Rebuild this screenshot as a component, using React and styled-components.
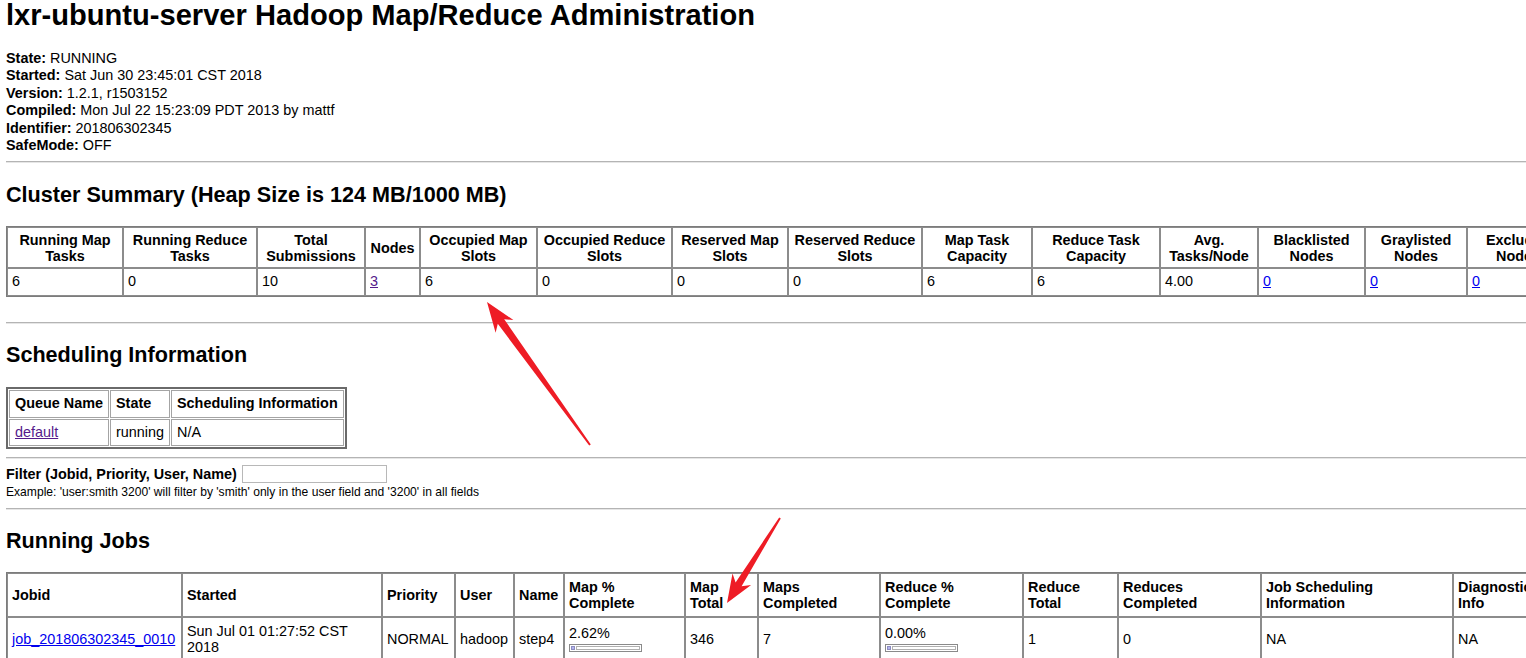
import React from 'react';
import styled, { createGlobalStyle } from 'styled-components';

const GlobalStyle = createGlobalStyle`
  html, body {
    margin: 0;
    padding: 0;
    overflow: hidden;
    background: #fff;
  }
  body {
    font-family: "Liberation Sans", Arial, sans-serif;
    font-size: 14.4px;
    color: #000;
  }
`;

const Page = styled.div`
  position: relative;
  display: flow-root;
  width: 1526px;
  height: 658px;
  overflow: hidden;
  padding-left: 6px;
  box-sizing: border-box;
`;

const Title = styled.h1`
  font-size: 29.1px;
  line-height: 34px;
  font-weight: bold;
  margin: -2px 0 18px;
  white-space: nowrap;
`;

const InfoList = styled.div`
  line-height: 17.4px;
`;

const Rule = styled.hr`
  height: 0;
  margin: ${p => p.$top}px 0 0;
  border: 0;
  border-top: 1px solid #b4b4b4;
  border-bottom: 1px solid #e6e6e6;
`;

const SectionTitle = styled.h2`
  font-size: 21.6px;
  line-height: 25px;
  font-weight: bold;
  margin: 18.5px 0 ${p => p.$after || 19.5}px;
  white-space: nowrap;
`;

const GridTable = styled.table`
  table-layout: fixed;
  border-collapse: separate;
  border-spacing: 0;
  border: 1px solid #7c7c7c;
  font-size: 14.4px;
`;

const HeadCell = styled.th`
  box-sizing: border-box;
  border: 1px solid #8c8c8c;
  padding: ${p => (p.$roomy ? '5px 4px' : '3.5px 4px')};
  line-height: 16px;
  font-weight: bold;
  text-align: ${p => p.$align || 'center'};
  vertical-align: middle;
  white-space: nowrap;
  overflow: hidden;
`;

const DataCell = styled.td`
  box-sizing: border-box;
  border: 1px solid #8c8c8c;
  padding: ${p => (p.$roomy ? '5px 4px' : '4px 4px')};
  line-height: ${p => (p.$roomy ? '16px' : '17.4px')};
  text-align: left;
  vertical-align: middle;
  overflow: hidden;
`;

const QueueTable = styled.table`
  border: 2px solid #6a6a6a;
  border-spacing: 1px;
  font-size: 14.4px;
`;

const QueueHead = styled.th`
  border: 1px solid #a4a4a4;
  padding: 4.5px 5px;
  line-height: 17px;
  text-align: left;
  font-weight: bold;
`;

const QueueCell = styled.td`
  border: 1px solid #a4a4a4;
  padding: 4.5px 5px;
  line-height: 16px;
  text-align: left;
`;

const Link = styled.a`
  color: ${p => (p.$visited ? '#551a8b' : '#0000ee')};
  text-decoration: underline;
  cursor: pointer;
`;

const FilterRow = styled.div`
  display: flex;
  align-items: center;
  gap: 5px;
  height: 18px;
  margin-top: 6px;
  font-weight: bold;
`;

const FilterInput = styled.input`
  box-sizing: border-box;
  width: 145px;
  height: 18px;
  padding: 0 2px;
  border: 1px solid #b8b8b8;
  font: inherit;
  font-weight: normal;
  font-size: 12px;
`;

const Hint = styled.div`
  font-size: 12.1px;
  line-height: 14px;
  margin-top: 2.5px;
`;

const Progress = styled.div`
  display: flex;
  gap: 1px;
  box-sizing: border-box;
  width: 73px;
  height: 8px;
  margin-top: 3px;
  padding: 1px;
  border: 1px solid #8a8a8a;
`;

const ProgressFill = styled.div`
  box-sizing: border-box;
  border: 1px solid #8d8dc0;
  background: #b4b4f0;
`;

const ProgressRest = styled.div`
  flex: 1;
  border: 1px solid #b0b0b0;
`;

const Overlay = styled.svg`
  position: absolute;
  top: 0;
  left: 0;
  pointer-events: none;
`;

const info = [
  ['State:', 'RUNNING'],
  ['Started:', 'Sat Jun 30 23:45:01 CST 2018'],
  ['Version:', '1.2.1, r1503152'],
  ['Compiled:', 'Mon Jul 22 15:23:09 PDT 2013 by mattf'],
  ['Identifier:', '201806302345'],
  ['SafeMode:', 'OFF'],
];

const cluster = [
  { head: ['Running Map', 'Tasks'], w: 116, value: '6' },
  { head: ['Running Reduce', 'Tasks'], w: 134, value: '0' },
  { head: ['Total', 'Submissions'], w: 108, value: '10' },
  { head: ['Nodes'], w: 55, value: '3', link: 'visited' },
  { head: ['Occupied Map', 'Slots'], w: 117, value: '6' },
  { head: ['Occupied Reduce', 'Slots'], w: 135, value: '0' },
  { head: ['Reserved Map', 'Slots'], w: 116, value: '0' },
  { head: ['Reserved Reduce', 'Slots'], w: 134, value: '0' },
  { head: ['Map Task', 'Capacity'], w: 110, value: '6' },
  { head: ['Reduce Task', 'Capacity'], w: 128, value: '6' },
  { head: ['Avg.', 'Tasks/Node'], w: 98, value: '4.00' },
  { head: ['Blacklisted', 'Nodes'], w: 107, value: '0', link: 'new' },
  { head: ['Graylisted', 'Nodes'], w: 102, value: '0', link: 'new' },
  { head: ['Excluded', 'Nodes'], w: 102, value: '0', link: 'new' },
];

const jobCols = [
  { head: ['Jobid'], w: 175 },
  { head: ['Started'], w: 200 },
  { head: ['Priority'], w: 73 },
  { head: ['User'], w: 59 },
  { head: ['Name'], w: 50 },
  { head: ['Map %', 'Complete'], w: 121 },
  { head: ['Map', 'Total'], w: 73 },
  { head: ['Maps', 'Completed'], w: 122 },
  { head: ['Reduce %', 'Complete'], w: 143 },
  { head: ['Reduce', 'Total'], w: 95 },
  { head: ['Reduces', 'Completed'], w: 143 },
  { head: ['Job Scheduling', 'Information'], w: 192 },
  { head: ['Diagnostic', 'Info'], w: 120 },
];

const sum = cols => cols.reduce((t, c) => t + c.w, 0) + 2;

const Lines = ({ lines }) =>
  lines.map((l, i) => (
    <React.Fragment key={i}>
      {i > 0 && <br />}
      {l}
    </React.Fragment>
  ));

const Percent = ({ value }) => (
  <>
    {value.toFixed(2)}%
    <Progress>
      <ProgressFill style={{ width: Math.max(4, (value / 100) * 69) }} />
      <ProgressRest />
    </Progress>
  </>
);

const Arrows = () => (
  <Overlay width="1526" height="658" viewBox="0 0 1526 658">
    <polygon
      fill="#ee1c25"
      points="487,302 513.4,320 504.2,319.2 590.8,444.4 589.2,445.6 497.8,323.8 495.6,332.8"
    />
    <polygon
      fill="#ee1c25"
      points="727,603 751.1,585.1 741.6,586.2 780.8,518.5 779.2,517.5 735.6,582.4 732.5,573.5"
    />
  </Overlay>
);

export default function App() {
  return (
    <>
      <GlobalStyle />
      <Page>
        <Title>lxr-ubuntu-server Hadoop Map/Reduce Administration</Title>

        <InfoList>
          {info.map(([label, value]) => (
            <div key={label}>
              <b>{label}</b> {value}
            </div>
          ))}
        </InfoList>

        <Rule $top={7} />
        <SectionTitle>Cluster Summary (Heap Size is 124 MB/1000 MB)</SectionTitle>
        <GridTable style={{ width: sum(cluster) }}>
          <thead>
            <tr>
              {cluster.map(c => (
                <HeadCell key={c.head.join()} style={{ width: c.w }}>
                  <Lines lines={c.head} />
                </HeadCell>
              ))}
            </tr>
          </thead>
          <tbody>
            <tr>
              {cluster.map(c => (
                <DataCell key={c.head.join()}>
                  {c.link ? <Link $visited={c.link === 'visited'}>{c.value}</Link> : c.value}
                </DataCell>
              ))}
            </tr>
          </tbody>
        </GridTable>

        <Rule $top={25} />
        <SectionTitle>Scheduling Information</SectionTitle>
        <QueueTable>
          <thead>
            <tr>
              <QueueHead>Queue Name</QueueHead>
              <QueueHead>State</QueueHead>
              <QueueHead>Scheduling Information</QueueHead>
            </tr>
          </thead>
          <tbody>
            <tr>
              <QueueCell>
                <Link $visited>default</Link>
              </QueueCell>
              <QueueCell>running</QueueCell>
              <QueueCell>N/A</QueueCell>
            </tr>
          </tbody>
        </QueueTable>

        <Rule $top={8} />
        <FilterRow>
          Filter (Jobid, Priority, User, Name)
          <FilterInput type="text" />
        </FilterRow>
        <Hint>
          Example: 'user:smith 3200' will filter by 'smith' only in the user field and '3200' in all fields
        </Hint>

        <Rule $top={8.5} />
        <SectionTitle $after={18.5}>Running Jobs</SectionTitle>
        <GridTable style={{ width: sum(jobCols) }}>
          <thead>
            <tr>
              {jobCols.map(c => (
                <HeadCell key={c.head.join()} $align="left" $roomy style={{ width: c.w }}>
                  <Lines lines={c.head} />
                </HeadCell>
              ))}
            </tr>
          </thead>
          <tbody>
            <tr>
              <DataCell $roomy>
                <Link>job_201806302345_0010</Link>
              </DataCell>
              <DataCell $roomy>Sun Jul 01 01:27:52 CST 2018</DataCell>
              <DataCell $roomy>NORMAL</DataCell>
              <DataCell $roomy>hadoop</DataCell>
              <DataCell $roomy>step4</DataCell>
              <DataCell $roomy>
                <Percent value={2.62} />
              </DataCell>
              <DataCell $roomy>346</DataCell>
              <DataCell $roomy>7</DataCell>
              <DataCell $roomy>
                <Percent value={0} />
              </DataCell>
              <DataCell $roomy>1</DataCell>
              <DataCell $roomy>0</DataCell>
              <DataCell $roomy>NA</DataCell>
              <DataCell $roomy>NA</DataCell>
            </tr>
          </tbody>
        </GridTable>

        <Arrows />
      </Page>
    </>
  );
}
